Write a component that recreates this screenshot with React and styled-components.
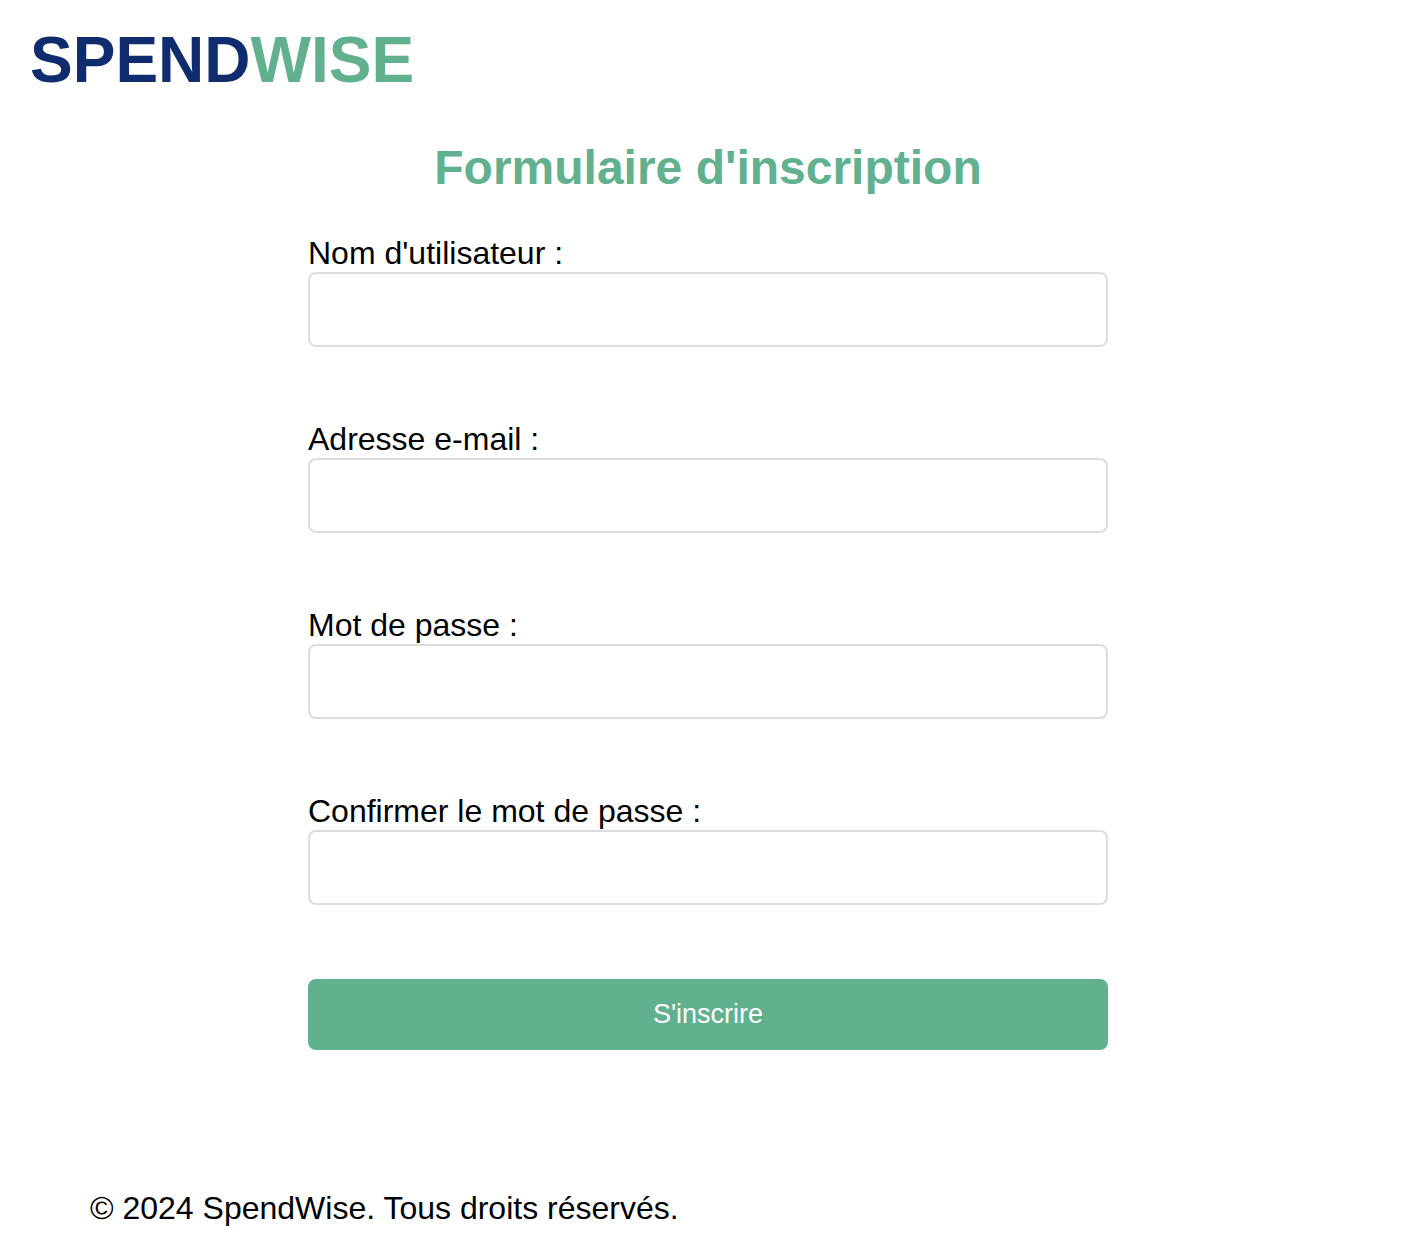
import React from "react";
import styled, { createGlobalStyle } from "styled-components";

const GlobalStyle = createGlobalStyle`
  * { box-sizing: border-box; }
  body {
    margin: 0;
    background: #fff;
    color: #000;
    font-family: "Liberation Sans", Arial, sans-serif;
    font-size: 32px;
    line-height: 36px;
  }
`;

const Header = styled.header`
  padding: 24px 30px;
`;

const Logo = styled.h1`
  margin: 0;
  color: #0f2c6e;
  font-size: 64px;
  line-height: 72px;
  font-weight: 700;
`;

const LogoAccent = styled.span`
  color: #61b08e;
`;

const Main = styled.main`
  display: flex;
  flex-direction: column;
  align-items: center;
  padding: 20px 32px 0 40px;
`;

const Title = styled.h2`
  margin: 0 0 39px;
  color: #61b08e;
  font-size: 48px;
  line-height: 56px;
  font-weight: 700;
`;

const Form = styled.form`
  display: flex;
  flex-direction: column;
  gap: 74px;
  width: 100%;
  max-width: 800px;
`;

const Field = styled.div`
  display: flex;
  flex-direction: column;
  gap: 1px;
`;

const Label = styled.label`
  line-height: 36px;
`;

const Input = styled.input`
  width: 100%;
  height: 75px;
  padding: 20px;
  border: 2px solid #ddd;
  border-radius: 8px;
  background: #fff;
  font: inherit;
  font-size: 27px;
`;

const SubmitButton = styled.button`
  width: 100%;
  padding: 20px 20px 21px;
  border: 0;
  border-radius: 8px;
  background: #61b08e;
  color: #fff;
  font-family: inherit;
  font-size: 27px;
  line-height: 30px;
  cursor: pointer;
`;

const Footer = styled.footer`
  padding: 140px 90px 20px;
`;

const Copyright = styled.p`
  margin: 0;
`;

const fields = [
  { id: "username", label: "Nom d'utilisateur :", type: "text" },
  { id: "email", label: "Adresse e-mail :", type: "email" },
  { id: "password", label: "Mot de passe :", type: "password" },
  { id: "confirm-password", label: "Confirmer le mot de passe :", type: "password" },
];

export default function App() {
  return (
    <>
      <GlobalStyle />
      <Header>
        <Logo>SPEND<LogoAccent>WISE</LogoAccent></Logo>
      </Header>
      <Main>
        <Title>Formulaire d'inscription</Title>
        <Form onSubmit={(event) => event.preventDefault()}>
          {fields.map(({ id, label, type }) => (
            <Field key={id}>
              <Label htmlFor={id}>{label}</Label>
              <Input id={id} name={id} type={type} />
            </Field>
          ))}
          <SubmitButton type="submit">S'inscrire</SubmitButton>
        </Form>
      </Main>
      <Footer>
        <Copyright>© 2024 SpendWise. Tous droits réservés.</Copyright>
      </Footer>
    </>
  );
}
